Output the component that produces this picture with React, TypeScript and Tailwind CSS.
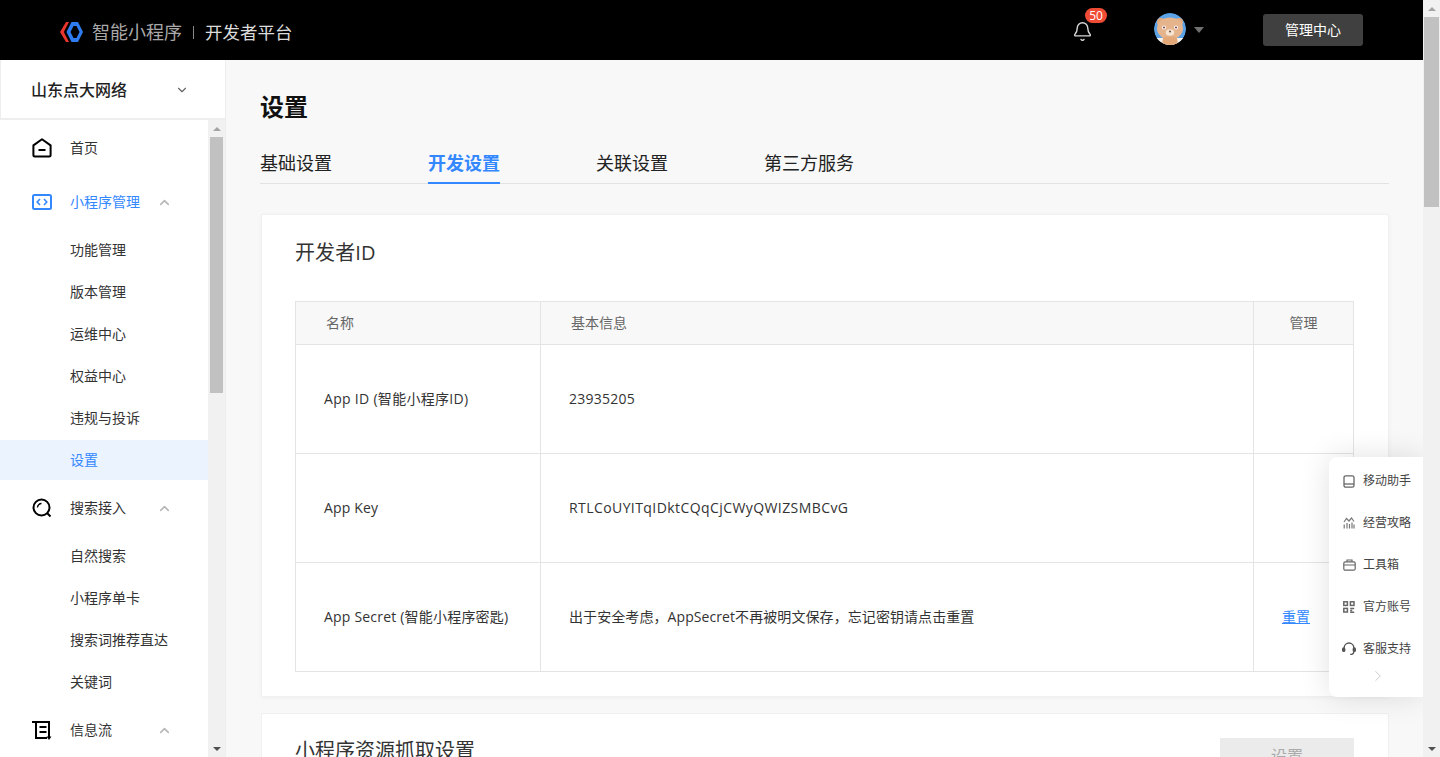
import { Bell, ChevronDown, ChevronRight, ChevronUp } from "lucide-react";

const cjk = "font-['Open_Sans','Noto_Sans_CJK_SC',sans-serif]";

const Scrollbar = ({ thumb }: { thumb: string }) => (
  <div className="w-[17px] h-full shrink-0 bg-[#f1f1f1] flex flex-col items-center relative">
    <div className="h-[17px] w-full flex items-center justify-center">
      <div className="w-0 h-0 border-x-[4px] border-x-transparent border-b-[4px] border-b-[#a3a3a3]" />
    </div>
    <div className={`bg-[#c1c1c1] ${thumb}`} />
    <div className="mt-auto h-[17px] w-full flex items-center justify-center">
      <div className="w-0 h-0 border-x-[4px] border-x-transparent border-t-[4px] border-t-[#505050]" />
    </div>
  </div>
);

const HomeIcon = () => (
  <svg width="20" height="20" viewBox="0 0 20 20" fill="none" stroke="#000" strokeWidth="2">
    <path d="M10 1.2 18.6 7.4V17a1.5 1.5 0 0 1-1.5 1.5H2.9A1.5 1.5 0 0 1 1.4 17V7.4Z" strokeLinejoin="round" />
    <path d="M6.5 12h7" />
  </svg>
);

const CodeIcon = () => (
  <svg width="20" height="16" viewBox="0 0 20 16" fill="none" stroke="#3388ff" strokeWidth="2">
    <rect x="1" y="1" width="18" height="14" rx="1.5" />
    <path d="M8 5 5.2 8 8 11M12 5l2.8 3L12 11" strokeWidth="1.6" />
  </svg>
);

const SearchIcon = () => (
  <svg width="20" height="20" viewBox="0 0 20 20" fill="none" stroke="#000" strokeWidth="2">
    <circle cx="9.5" cy="9.5" r="8" />
    <path d="M5.5 9.5a4 4 0 0 1 4-4" strokeWidth="1.4" />
    <path d="m15 15 3.5 3.5" />
  </svg>
);

const FeedIcon = () => (
  <svg width="20" height="20" viewBox="0 0 20 20" fill="none" stroke="#000" strokeWidth="2">
    <path d="M0 2H17V17" />
    <path d="M4 2V18H15" />
    <path d="M7.5 7h7M7.5 12h7" />
    <path d="M14.5 16.5h5L17 20Z" fill="#000" stroke="none" />
  </svg>
);

const PhoneIcon = () => (
  <svg width="12" height="13" viewBox="0 0 12 13" fill="none" stroke="#666" strokeWidth="1.3">
    <rect x="1" y="0.8" width="10" height="11.4" rx="1.8" />
    <path d="M1 9h10" />
  </svg>
);

const ChartIcon = () => (
  <svg width="12" height="12" viewBox="0 0 12 12" fill="none" stroke="#777" strokeWidth="1.2">
    <path d="M1 5 3.5 1.5 6 4l2.5-3L11 4.5" />
    <path d="M1.2 7.5V11.5M4 6V11.5M6.5 7V11.5M9 5.5V11.5M11 7.5V11.5" />
  </svg>
);

const BoxIcon = () => (
  <svg width="13" height="12" viewBox="0 0 13 12" fill="none" stroke="#666" strokeWidth="1.2">
    <rect x="0.8" y="2.8" width="11.4" height="8.4" rx="1.5" />
    <path d="M4 2.8V1h5v1.8M0.8 6h11.4" />
  </svg>
);

const GridIcon = () => (
  <svg width="12" height="12" viewBox="0 0 12 12" fill="none" stroke="#666" strokeWidth="1.5">
    <rect x="0.8" y="0.8" width="3.6" height="3.6" />
    <rect x="7.4" y="0.8" width="3.6" height="3.6" />
    <rect x="0.8" y="7.4" width="3.6" height="3.6" />
    <path d="M7.2 7.4h4M7.2 9.4h2M7.2 11.2h4" />
  </svg>
);

const HeadsetIcon = () => (
  <svg width="14" height="14" viewBox="0 0 14 14" fill="none" stroke="#555" strokeWidth="1.4">
    <path d="M2.2 7V5.8a4.8 4.8 0 0 1 9.6 0V7" />
    <rect x="0.7" y="6" width="2" height="3.4" rx="1" fill="#555" />
    <rect x="11.3" y="6" width="2" height="3.4" rx="1" fill="#555" />
    <path d="M11.8 9.4c0 2-1.6 3-3.6 3" />
  </svg>
);

const BearAvatar = () => (
  <svg width="32" height="32" viewBox="0 0 32 32" className="rounded-full -mt-[2px]">
    <circle cx="16" cy="16" r="16" fill="#5ba3e6" />
    <path d="M0 25h32v7H0Z" fill="#f6f1ea" />
    <circle cx="7" cy="9" r="4" fill="#e0aa80" />
    <circle cx="25" cy="9" r="4" fill="#e0aa80" />
    <ellipse cx="16" cy="15.5" rx="13" ry="11" fill="#e6b48c" />
    <path d="M9 25c2-2 12-2 14 0l1 7H8Z" fill="#e3a878" />
    <circle cx="10" cy="14.5" r="1.9" fill="#fff" />
    <circle cx="22" cy="14.5" r="1.9" fill="#fff" />
    <circle cx="10" cy="14.5" r="1" fill="#6d3b46" />
    <circle cx="22" cy="14.5" r="1" fill="#6d3b46" />
    <ellipse cx="16" cy="19.5" rx="4.2" ry="3.2" fill="#f6e4d2" />
    <circle cx="16" cy="18.5" r="1" fill="#6d4a3a" />
  </svg>
);

const Logo = () => (
  <svg width="25" height="22" viewBox="0 0 25 22" fill="none">
    <path d="M7 1 1 11 7 21h3L4.8 11 10 1Z" fill="#e8352e" />
    <path d="M12.5 1H19l5 10-5 10h-6.5L7.5 11Z" fill="#2f7bf0" />
    <path d="M14.5 5h3l3 6-3 6h-3l-3-6Z" fill="#000" />
  </svg>
);

type SubMenu = { label: string; active?: boolean };

const SubItem = ({ label, active }: SubMenu) => (
  <div className={`h-10 pl-[70px] flex items-center text-sm ${active ? "bg-[#ebf3ff] text-[#3388ff]" : "text-[#333]"}`}>
    {label}
  </div>
);

const TopItem = ({ icon, label, active, open }: { icon: React.ReactNode; label: string; active?: boolean; open?: boolean }) => (
  <div className="h-[54px] flex items-center pl-[32px]">
    <div className="w-5 h-5 flex items-center justify-center shrink-0">{icon}</div>
    <span className={`ml-[18px] w-[87px] text-sm ${active ? "text-[#3388ff]" : "text-[#333]"}`}>{label}</span>
    {open && <ChevronUp size={15} strokeWidth={2.4} className="text-[#b5b5b5]" />}
  </div>
);

const Sidebar = () => (
  <aside className="w-[226px] shrink-0 bg-white flex flex-col border-r border-[#eeeeee]">
    <div className="h-[60px] shrink-0 border-l border-b-2 border-[#eeeeee] flex items-center pl-[30px] pr-[36px] pt-[2px] justify-between">
      <span className="text-base font-medium text-[#1f1f1f]">山东点大网络</span>
      <ChevronDown size={14} className="text-[#666]" />
    </div>
    <div className="flex-1 min-h-0 flex">
      <div className="w-[208px] pt-[1px] overflow-hidden">
        <TopItem icon={<HomeIcon />} label="首页" />
        <TopItem icon={<CodeIcon />} label="小程序管理" active open />
        <div className="mt-[1px] flex flex-col gap-[2px]">
          <SubItem label="功能管理" />
          <SubItem label="版本管理" />
          <SubItem label="运维中心" />
          <SubItem label="权益中心" />
          <SubItem label="违规与投诉" />
          <SubItem label="设置" active />
        </div>
        <div className="h-[1px]" />
        <TopItem icon={<SearchIcon />} label="搜索接入" open />
        <div className="mt-[1px] flex flex-col gap-[2px]">
          <SubItem label="自然搜索" />
          <SubItem label="小程序单卡" />
          <SubItem label="搜索词推荐直达" />
          <SubItem label="关键词" />
        </div>
        <div className="h-[1px]" />
        <TopItem icon={<FeedIcon />} label="信息流" open />
      </div>
      <Scrollbar thumb="w-[13px] h-[256px]" />
    </div>
  </aside>
);

const Row = ({ label, labelClass, children, action }: { label: string; labelClass?: string; children: React.ReactNode; action?: React.ReactNode }) => (
  <div className="h-[109px] flex border-t border-[#e4e4e4] text-sm text-[#333]">
    <div className={`w-[245px] pl-[28px] flex items-center border-r border-[#e4e4e4] ${labelClass}`}>{label}</div>
    <div className="flex-1 pl-[28px] flex items-center border-r border-[#e4e4e4]">{children}</div>
    <div className="w-[99px] pl-[28px] flex items-center">{action}</div>
  </div>
);

const Tab = ({ label, active }: { label: string; active?: boolean }) => (
  <div className={`h-[40px] pt-[4px] text-lg leading-[30px] border-b-2 ${active ? "font-bold text-[#3388ff] border-[#3388ff]" : "text-[#222] border-transparent"}`}>
    {label}
  </div>
);

const FloatItem = ({ icon, label }: { icon: React.ReactNode; label: string }) => (
  <div className="h-[42px] flex items-center pl-[13px]">
    <div className="w-[14px] flex justify-center">{icon}</div>
    <span className="ml-[7px] text-xs text-[#444]">{label}</span>
  </div>
);

export default function App() {
  return (
    <div className={`h-[757px] w-[1440px] flex overflow-hidden ${cjk}`}>
      <div className="w-[1423px] h-full flex flex-col relative overflow-hidden">
        <header className="h-[60px] shrink-0 bg-black flex items-center pl-[59px] pr-[60px]">
          <div className="flex items-center mt-[4px]">
            <Logo />
            <span className="ml-2 text-lg text-[#a9a9a9]">智能小程序</span>
            <div className="ml-[11px] w-px h-[13px] bg-[#888]" />
            <span className="ml-[11px] text-[17.5px] text-[#dcdcdc]">开发者平台</span>
          </div>
          <div className="relative ml-auto mr-[61px]">
            <Bell size={21} strokeWidth={1.6} className="text-[#d8d8d8] mt-[2px] -ml-[1px]" />
            <span className="absolute -top-[11px] left-[12px] h-[15px] w-[22px] rounded-full bg-[#f04b35] text-white text-xs leading-[15px] text-center">50</span>
          </div>
          <BearAvatar />
          <div className="ml-[8px] mr-[59px] w-0 h-0 border-x-[5px] border-x-transparent border-t-[6px] border-t-[#707070]" />
          <button className="w-[100px] h-8 rounded-[3px] bg-[#404040] text-sm text-white">管理中心</button>
        </header>
        <div className="flex-1 min-h-0 flex">
          <Sidebar />
          <main className="flex-1 min-w-0 bg-[#f8f8f8] pl-[34px] pr-[34px] overflow-hidden">
            <h1 className="mt-[28px] text-2xl leading-[38px] font-bold text-[#111]">设置</h1>
            <div className="mt-[18px] flex gap-[96px] border-b border-[#e2e2e2] h-[40px]">
              <Tab label="基础设置" />
              <Tab label="开发设置" active />
              <Tab label="关联设置" />
              <Tab label="第三方服务" />
            </div>
            <section className="mt-[30px] ml-px h-[483px] bg-white rounded-[2px] border border-[#f0f0f0] pl-[33px] pr-[34px] pt-[20px] shadow-[0_1px_4px_rgba(0,0,0,0.04)]">
              <h2 className="text-xl leading-[36px] tracking-[0.1px] text-[#333]">开发者ID</h2>
              <div className="mt-[30px] border border-[#e4e4e4]">
                <div className="h-[42px] flex bg-[#f8f8f8] text-sm text-[#666]">
                  <div className="w-[245px] pl-[30px] flex items-center border-r border-[#e4e4e4]">名称</div>
                  <div className="flex-1 pl-[30px] flex items-center border-r border-[#e4e4e4]">基本信息</div>
                  <div className="w-[99px] flex items-center justify-center">管理</div>
                </div>
                <Row label="App ID (智能小程序ID)" labelClass="tracking-[0.3px]"><span className="tracking-[0.25px]">23935205</span></Row>
                <Row label="App Key" labelClass="tracking-[0.15px]"><span className="tracking-[0.42px]">RTLCoUYITqIDktCQqCjCWyQWIZSMBCvG</span></Row>
                <Row label="App Secret (智能小程序密匙)" labelClass="tracking-[0.2px]" action={<a className="text-[#3388ff] underline">重置</a>}>
                  <span className="tracking-[0.08px]">出于安全考虑，AppSecret不再被明文保存，忘记密钥请点击重置</span>
                </Row>
              </div>
            </section>
            <section className="mt-4 ml-px h-[120px] bg-white rounded-[2px] border border-[#f0f0f0] pl-[33px] pr-[34px] pt-[23px] flex justify-between items-start">
              <h2 className="text-xl leading-[28px] text-[#333]">小程序资源抓取设置</h2>
              <button className="mt-px w-[134px] h-[36px] bg-[#ebebeb] text-base text-[#aaa]">设置</button>
            </section>
          </main>
        </div>
        <div className="absolute left-[1329px] top-[457px] w-[94px] h-[240px] bg-white rounded-l-[8px] shadow-[0_0_30px_rgba(0,0,0,0.12)] pt-[3px]">
          <FloatItem icon={<PhoneIcon />} label="移动助手" />
          <FloatItem icon={<ChartIcon />} label="经营攻略" />
          <FloatItem icon={<BoxIcon />} label="工具箱" />
          <FloatItem icon={<GridIcon />} label="官方账号" />
          <FloatItem icon={<HeadsetIcon />} label="客服支持" />
          <div className="flex justify-center pl-[4px] -mt-[3px]">
            <ChevronRight size={18} strokeWidth={1} className="text-[#bbb]" />
          </div>
        </div>
      </div>
      <Scrollbar thumb="w-[15px] h-[190px]" />
    </div>
  );
}
